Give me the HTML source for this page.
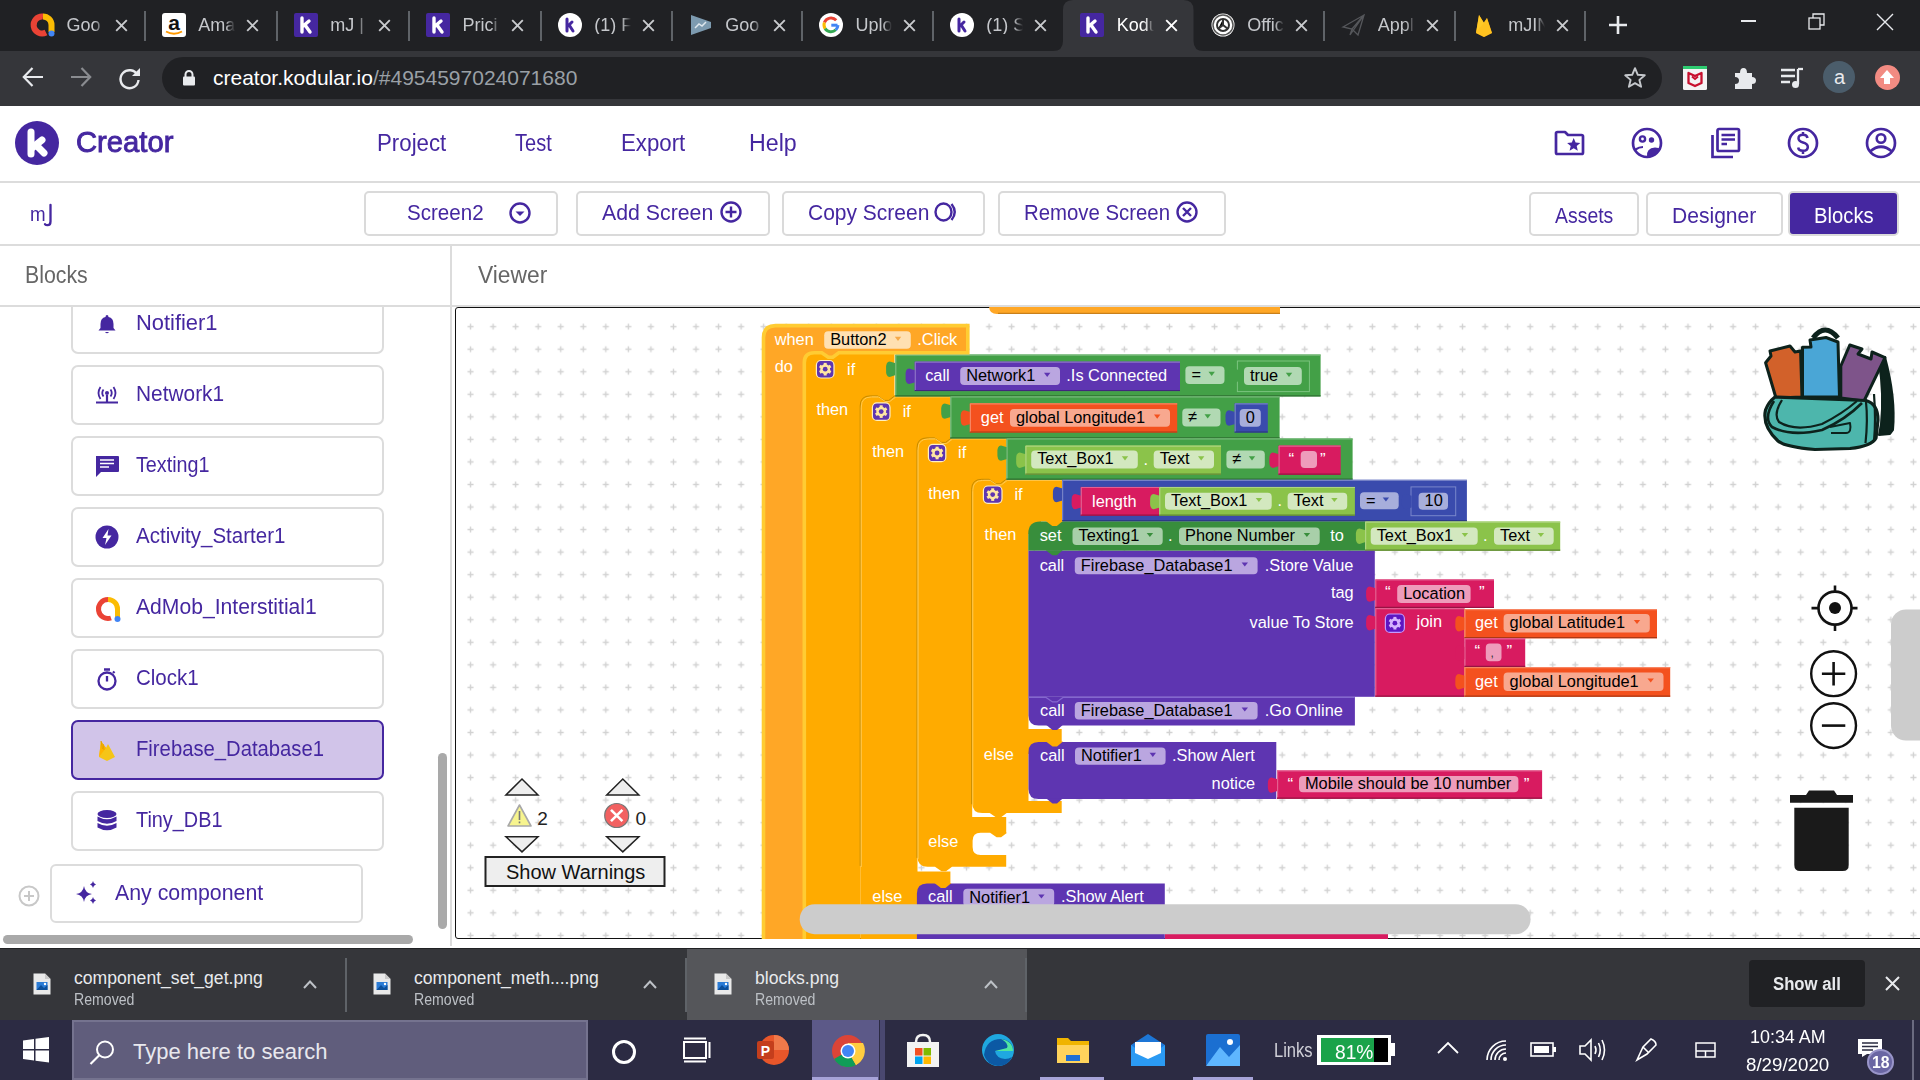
<!DOCTYPE html><html><head><meta charset="utf-8"><style>
*{margin:0;padding:0;box-sizing:border-box}
html,body{width:1920px;height:1080px;overflow:hidden;background:#fff;font-family:"Liberation Sans",sans-serif}
.a{position:absolute}
.t{position:absolute;white-space:nowrap;line-height:1}
svg{position:absolute;overflow:visible}
</style></head><body><div class="a" style="left:0px;top:0px;width:1920px;height:51px;background:#202124"></div><div class="a" style="left:0px;top:51px;width:1920px;height:55px;background:#35363a"></div><div class="t" style="left:66.5px;top:16px;width:37px;overflow:hidden;font-size:18px;color:#c5c7cb;-webkit-mask-image:linear-gradient(to right,#000 75%,transparent)">Goo</div><svg style="left:114.5px;top:18.5px" width="13" height="13" viewBox="0 0 13 13"><path d="M1.2 1.2L11.8 11.8M11.8 1.2L1.2 11.8" stroke="#c9cbce" stroke-width="1.9"/></svg><div class="a" style="left:144px;top:11px;width:2px;height:30px;background:#5f6368"></div><div class="t" style="left:198.3px;top:16px;width:37px;overflow:hidden;font-size:18px;color:#c5c7cb;-webkit-mask-image:linear-gradient(to right,#000 75%,transparent)">Ama</div><svg style="left:246.3px;top:18.5px" width="13" height="13" viewBox="0 0 13 13"><path d="M1.2 1.2L11.8 11.8M11.8 1.2L1.2 11.8" stroke="#c9cbce" stroke-width="1.9"/></svg><div class="a" style="left:276px;top:11px;width:2px;height:30px;background:#5f6368"></div><div class="t" style="left:330.3px;top:16px;width:37px;overflow:hidden;font-size:18px;color:#c5c7cb;-webkit-mask-image:linear-gradient(to right,#000 75%,transparent)">mJ |</div><svg style="left:378.3px;top:18.5px" width="13" height="13" viewBox="0 0 13 13"><path d="M1.2 1.2L11.8 11.8M11.8 1.2L1.2 11.8" stroke="#c9cbce" stroke-width="1.9"/></svg><div class="a" style="left:408px;top:11px;width:2px;height:30px;background:#5f6368"></div><div class="t" style="left:462.5px;top:16px;width:37px;overflow:hidden;font-size:18px;color:#c5c7cb;-webkit-mask-image:linear-gradient(to right,#000 75%,transparent)">Prici</div><svg style="left:510.5px;top:18.5px" width="13" height="13" viewBox="0 0 13 13"><path d="M1.2 1.2L11.8 11.8M11.8 1.2L1.2 11.8" stroke="#c9cbce" stroke-width="1.9"/></svg><div class="a" style="left:540px;top:11px;width:2px;height:30px;background:#5f6368"></div><div class="t" style="left:594.3px;top:16px;width:37px;overflow:hidden;font-size:18px;color:#c5c7cb;-webkit-mask-image:linear-gradient(to right,#000 75%,transparent)">(1) F</div><svg style="left:642.3px;top:18.5px" width="13" height="13" viewBox="0 0 13 13"><path d="M1.2 1.2L11.8 11.8M11.8 1.2L1.2 11.8" stroke="#c9cbce" stroke-width="1.9"/></svg><div class="a" style="left:671px;top:11px;width:2px;height:30px;background:#5f6368"></div><div class="t" style="left:725.2px;top:16px;width:37px;overflow:hidden;font-size:18px;color:#c5c7cb;-webkit-mask-image:linear-gradient(to right,#000 75%,transparent)">Goo</div><svg style="left:773.2px;top:18.5px" width="13" height="13" viewBox="0 0 13 13"><path d="M1.2 1.2L11.8 11.8M11.8 1.2L1.2 11.8" stroke="#c9cbce" stroke-width="1.9"/></svg><div class="a" style="left:801px;top:11px;width:2px;height:30px;background:#5f6368"></div><div class="t" style="left:855.4px;top:16px;width:37px;overflow:hidden;font-size:18px;color:#c5c7cb;-webkit-mask-image:linear-gradient(to right,#000 75%,transparent)">Uplo</div><svg style="left:903.4px;top:18.5px" width="13" height="13" viewBox="0 0 13 13"><path d="M1.2 1.2L11.8 11.8M11.8 1.2L1.2 11.8" stroke="#c9cbce" stroke-width="1.9"/></svg><div class="a" style="left:932px;top:11px;width:2px;height:30px;background:#5f6368"></div><div class="t" style="left:986.2px;top:16px;width:37px;overflow:hidden;font-size:18px;color:#c5c7cb;-webkit-mask-image:linear-gradient(to right,#000 75%,transparent)">(1) S</div><svg style="left:1034.2px;top:18.5px" width="13" height="13" viewBox="0 0 13 13"><path d="M1.2 1.2L11.8 11.8M11.8 1.2L1.2 11.8" stroke="#c9cbce" stroke-width="1.9"/></svg><svg style="left:1053.2px;top:0px" width="150.5" height="51" viewBox="0 0 150.5 51"><path d="M0 51 Q10 51 10 41 L10 10 Q10 0 20 0 L130.5 0 Q140.5 0 140.5 10 L140.5 41 Q140.5 51 150.5 51 Z" fill="#35363a"/></svg><div class="t" style="left:1116.7px;top:16px;width:37px;overflow:hidden;font-size:18px;color:#ffffff;-webkit-mask-image:linear-gradient(to right,#000 75%,transparent)">Kodu</div><svg style="left:1164.7px;top:18.5px" width="13" height="13" viewBox="0 0 13 13"><path d="M1.2 1.2L11.8 11.8M11.8 1.2L1.2 11.8" stroke="#ffffff" stroke-width="1.9"/></svg><div class="t" style="left:1247.2px;top:16px;width:37px;overflow:hidden;font-size:18px;color:#c5c7cb;-webkit-mask-image:linear-gradient(to right,#000 75%,transparent)">Offic</div><svg style="left:1295.2px;top:18.5px" width="13" height="13" viewBox="0 0 13 13"><path d="M1.2 1.2L11.8 11.8M11.8 1.2L1.2 11.8" stroke="#c9cbce" stroke-width="1.9"/></svg><div class="a" style="left:1323px;top:11px;width:2px;height:30px;background:#5f6368"></div><div class="t" style="left:1377.7px;top:16px;width:37px;overflow:hidden;font-size:18px;color:#c5c7cb;-webkit-mask-image:linear-gradient(to right,#000 75%,transparent)">Appl</div><svg style="left:1425.7px;top:18.5px" width="13" height="13" viewBox="0 0 13 13"><path d="M1.2 1.2L11.8 11.8M11.8 1.2L1.2 11.8" stroke="#c9cbce" stroke-width="1.9"/></svg><div class="a" style="left:1454px;top:11px;width:2px;height:30px;background:#5f6368"></div><div class="t" style="left:1508.2px;top:16px;width:37px;overflow:hidden;font-size:18px;color:#c5c7cb;-webkit-mask-image:linear-gradient(to right,#000 75%,transparent)">mJIN</div><svg style="left:1556.2px;top:18.5px" width="13" height="13" viewBox="0 0 13 13"><path d="M1.2 1.2L11.8 11.8M11.8 1.2L1.2 11.8" stroke="#c9cbce" stroke-width="1.9"/></svg><div class="a" style="left:1584px;top:11px;width:2px;height:30px;background:#5f6368"></div><svg style="left:31px;top:13px;" width="24" height="24" viewBox="0 0 24 24"><path d="M12 3.5 A8.5 8.5 0 1 0 15 19.5" fill="none" stroke="#ea4335" stroke-width="6"/><path d="M12 3.5 A8.5 8.5 0 0 1 20.5 12 L20.5 19" fill="none" stroke="#fbbc04" stroke-width="6"/><circle cx="20.5" cy="20.5" r="3" fill="#4285f4"/></svg><svg style="left:161.8px;top:13px;" width="24" height="24" viewBox="0 0 24 24"><rect x="0" y="0" width="24" height="24" rx="3" fill="#fff"/><text x="12" y="16.5" font-family="Liberation Sans" font-size="21" font-weight="bold" text-anchor="middle" fill="#111">a</text><path d="M4 18.5 Q12 23 20 18.5" stroke="#f90" stroke-width="2" fill="none"/></svg><svg style="left:293.8px;top:13px;" width="24" height="24" viewBox="0 0 24 24"><rect x="0" y="0" width="24" height="24" rx="2" fill="#4527a0"/><path d="M8 5 L8 19 M8 14 L15 8 M11 12 L16 19" stroke="#fff" stroke-width="3.4" stroke-linecap="round" fill="none"/></svg><svg style="left:426px;top:13px;" width="24" height="24" viewBox="0 0 24 24"><rect x="0" y="0" width="24" height="24" rx="2" fill="#4527a0"/><path d="M8 5 L8 19 M8 14 L15 8 M11 12 L16 19" stroke="#fff" stroke-width="3.4" stroke-linecap="round" fill="none"/></svg><svg style="left:1080.2px;top:13px;" width="24" height="24" viewBox="0 0 24 24"><rect x="0" y="0" width="24" height="24" rx="2" fill="#4527a0"/><path d="M8 5 L8 19 M8 14 L15 8 M11 12 L16 19" stroke="#fff" stroke-width="3.4" stroke-linecap="round" fill="none"/></svg><svg style="left:557.8px;top:13px;" width="24" height="24" viewBox="0 0 24 24"><circle cx="12" cy="12" r="12" fill="#fff"/><path d="M9 6 L9 18 M9 14 L14 9 M11.5 12.5 L15 18" stroke="#4527a0" stroke-width="3" stroke-linecap="round" fill="none"/></svg><svg style="left:949.7px;top:13px;" width="24" height="24" viewBox="0 0 24 24"><circle cx="12" cy="12" r="12" fill="#fff"/><path d="M9 6 L9 18 M9 14 L14 9 M11.5 12.5 L15 18" stroke="#4527a0" stroke-width="3" stroke-linecap="round" fill="none"/></svg><svg style="left:688.7px;top:13px;" width="24" height="24" viewBox="0 0 24 24"><path d="M2 2 L22 9 L22 15 L2 22 Z" fill="#7d9bb0"/><path d="M6 15 L10 11 L13 13 L17 9" stroke="#dfe8ee" stroke-width="1.5" fill="none"/></svg><svg style="left:818.9px;top:13px;" width="24" height="24" viewBox="0 0 24 24"><circle cx="12" cy="12" r="12" fill="#fff"/><path d="M18.5 12.2 L12.3 12.2" stroke="#4285f4" stroke-width="3"/><path d="M17.2 7.3 A7 7 0 0 0 5.4 9.6" stroke="#ea4335" stroke-width="3" fill="none"/><path d="M5.4 9.6 A7 7 0 0 0 6.1 15.7" stroke="#fbbc04" stroke-width="3" fill="none"/><path d="M6.1 15.7 A7 7 0 0 0 16.8 16.8" stroke="#34a853" stroke-width="3" fill="none"/><path d="M16.8 16.8 A7 7 0 0 0 19 12.2" stroke="#4285f4" stroke-width="3" fill="none"/></svg><svg style="left:1210.7px;top:13px;" width="24" height="24" viewBox="0 0 24 24"><circle cx="12" cy="12" r="11.5" fill="#fff"/><circle cx="12" cy="12" r="10" fill="none" stroke="#555" stroke-width="1.5"/><circle cx="12" cy="12" r="6" fill="none" stroke="#333" stroke-width="2"/><path d="M12 6 L12 12 L7 16 M12 12 L17 16" stroke="#333" stroke-width="2"/></svg><svg style="left:1341.2px;top:13px;" width="24" height="24" viewBox="0 0 24 24"><path d="M2 14 L23 2 L17 22 L11 16 Z M11 16 L23 2 L9 22 Z" fill="none" stroke="#55575b" stroke-width="1.3"/></svg><svg style="left:1473.7px;top:13px;" width="20" height="24" viewBox="0 0 20 24"><path d="M2 20 L5 2 L10 10 L13 5 L18 20 L10 24 Z" fill="#ffa000"/><path d="M2 20 L5 2 L10 10 Z" fill="#ffca28"/><path d="M2 20 L13 5 L18 20 L10 24 Z" fill="#ffca28" opacity="0.8"/></svg><svg style="left:1608px;top:15px;" width="20" height="20" viewBox="0 0 20 20"><path d="M10 1 L10 19 M1 10 L19 10" stroke="#e8eaed" stroke-width="2.6"/></svg><div class="a" style="left:1741px;top:20px;width:15px;height:1.5px;background:#e8eaed"></div><svg style="left:1808px;top:13px;" width="18" height="18" viewBox="0 0 18 18"><rect x="1" y="5" width="11" height="11" fill="none" stroke="#e8eaed" stroke-width="1.3"/><path d="M5 5 L5 1 L16 1 L16 12 L12 12" fill="none" stroke="#e8eaed" stroke-width="1.3"/></svg><svg style="left:1876px;top:13px;" width="18" height="18" viewBox="0 0 18 18"><path d="M1 1 L17 17 M17 1 L1 17" stroke="#e8eaed" stroke-width="1.4"/></svg><svg style="left:22px;top:66px;" width="22" height="22" viewBox="0 0 22 22"><path d="M1.5 11 L21 11 M10.5 2 L1.8 11 L10.5 20" fill="none" stroke="#e8eaed" stroke-width="2.2"/></svg><svg style="left:70px;top:66px;" width="22" height="22" viewBox="0 0 22 22"><path d="M20.5 11 L1 11 M11.5 2 L20.2 11 L11.5 20" fill="none" stroke="#8a8c90" stroke-width="2.2"/></svg><svg style="left:118px;top:66px;" width="24" height="24" viewBox="0 0 24 24"><path d="M19.5 9 A9 9 0 1 0 20.5 14" fill="none" stroke="#e8eaed" stroke-width="2.4"/><path d="M22 2 L22 10 L14 10 Z" fill="#e8eaed"/></svg><div class="a" style="left:162px;top:57px;width:1500px;height:42px;background:#202124;border-radius:21px"></div><svg style="left:182px;top:70px;" width="14" height="16" viewBox="0 0 14 16"><rect x="1" y="6.5" width="12" height="9" rx="1" fill="#e8eaed"/><path d="M3.5 7 L3.5 4.5 A3.5 3.5 0 0 1 10.5 4.5 L10.5 7" fill="none" stroke="#e8eaed" stroke-width="2"/></svg><div class="t" style="left:213px;top:67.2px;font-size:21px;color:#fff;"><span style="color:#ffffff">creator.kodular.io</span><span style="color:#9aa0a6">/#4954597024071680</span></div><svg style="left:1623px;top:66px;" width="24" height="24" viewBox="0 0 24 24"><path d="M12 2.2 L14.8 8.8 L21.8 9.3 L16.4 13.9 L18.1 20.8 L12 17.1 L5.9 20.8 L7.6 13.9 L2.2 9.3 L9.2 8.8 Z" fill="none" stroke="#c4c7cb" stroke-width="1.9" stroke-linejoin="round"/></svg><svg style="left:1683px;top:66px;" width="24" height="24" viewBox="0 0 24 24"><rect x="0" y="0" width="24" height="24" rx="1.5" fill="#f4f4f4"/><rect x="0" y="0" width="24" height="3" fill="#2ecc71"/><path d="M5.5 7 L12 10 L18.5 7 L18.5 17 L12 20 L5.5 17 Z" fill="none" stroke="#c8102e" stroke-width="2.3" stroke-linejoin="round"/><path d="M9 10.5 L12 13 L15 10.5" fill="none" stroke="#c8102e" stroke-width="2"/></svg><svg style="left:1731px;top:65px;" width="26" height="26" viewBox="0 0 26 26"><path d="M4 8 L9 8 Q9 3 12.5 3 Q16 3 16 8 L21 8 L21 12 Q25 12 25 15.5 Q25 19 21 19 L21 24 L4 24 L4 19 Q8 19 8 15.5 Q8 12 4 12 Z" fill="#e8eaed"/></svg><svg style="left:1779px;top:65px;" width="26" height="26" viewBox="0 0 26 26"><path d="M2 5 L16 5 M2 11 L16 11 M2 17 L11 17" stroke="#e8eaed" stroke-width="2.3"/><path d="M19 4 L19 19" stroke="#e8eaed" stroke-width="2.3"/><path d="M19 4 L24 4" stroke="#e8eaed" stroke-width="2.3"/><circle cx="16.5" cy="19.5" r="3.5" fill="#e8eaed"/></svg><div class="a" style="left:1823px;top:61px;width:32px;height:32px;background:#4b5d6b;border-radius:50%"></div><div class="t" style="left:1834px;top:67.1px;font-size:20px;color:#e8eaed;">a</div><div class="a" style="left:1874.5px;top:64.5px;width:25px;height:25px;background:#f28b82;border-radius:50%"></div><svg style="left:1877px;top:67px;" width="20" height="20" viewBox="0 0 20 20"><path d="M10 3 L17 11 L13 11 L13 17 L7 17 L7 11 L3 11 Z" fill="#fff"/></svg><div class="a" style="left:0px;top:106px;width:1920px;height:75px;background:#fff"></div><div class="a" style="left:15px;top:121px;width:44px;height:44px;background:#4527a0;border-radius:50%"></div><svg style="left:15px;top:121px;" width="44" height="44" viewBox="0 0 44 44"><path d="M16 11 L16 33" stroke="#fff" stroke-width="7" stroke-linecap="round"/><path d="M17 27 L27 19 M21 24 L29 32" stroke="#fff" stroke-width="7" stroke-linecap="round"/></svg><div class="t" style="left:75.8px;top:127.0px;font-size:30px;color:#4527a0;transform:scaleX(0.9737);transform-origin:0 0;-webkit-text-stroke:0.9px #4527a0">Creator</div><div class="t" style="left:376.7px;top:132.2px;font-size:23px;color:#4527a0;transform:scaleX(0.9681);transform-origin:0 0;">Project</div><div class="t" style="left:515px;top:132.2px;font-size:23px;color:#4527a0;transform:scaleX(0.8701);transform-origin:0 0;">Test</div><div class="t" style="left:620.7px;top:132.2px;font-size:23px;color:#4527a0;transform:scaleX(0.9674);transform-origin:0 0;">Export</div><div class="t" style="left:749px;top:132.2px;font-size:23px;color:#4527a0;transform:scaleX(1.0084);transform-origin:0 0;">Help</div><svg style="left:1554px;top:130px;" width="32" height="26" viewBox="0 0 32 26"><path d="M2 3.5 Q2 2 3.5 2 L11 2 L14 5 L27.5 5 Q29 5 29 6.5 L29 22.5 Q29 24 27.5 24 L3.5 24 Q2 24 2 22.5 Z" fill="none" stroke="#4527a0" stroke-width="2.7" stroke-linejoin="round"/><path d="M19.7 8 L21.6 12.6 L26.3 12.9 L22.7 16 L23.8 20.8 L19.7 18.3 L15.6 20.8 L16.7 16 L13.1 12.9 L17.8 12.6Z" fill="#4527a0"/></svg><svg style="left:1631px;top:127px;" width="32" height="32" viewBox="0 0 32 32"><circle cx="16" cy="16" r="14" fill="none" stroke="#4527a0" stroke-width="2.7"/><circle cx="11.5" cy="12" r="2.6" fill="none" stroke="#4527a0" stroke-width="2.4"/><circle cx="20.5" cy="13" r="2.7" fill="#4527a0"/><path d="M16 30 Q15 21 24 20.5 Q28 20.5 29.5 22 Q26 29 16 30Z" fill="#4527a0"/><path d="M4.5 22.5 Q8 20 12 20" fill="none" stroke="#4527a0" stroke-width="2.2"/></svg><svg style="left:1709px;top:127px;" width="34" height="34" viewBox="0 0 34 34"><rect x="8.5" y="2" width="21.5" height="22" rx="1.5" fill="none" stroke="#4527a0" stroke-width="2.7"/><path d="M3.5 8 L3.5 30 L24 30" fill="none" stroke="#4527a0" stroke-width="2.7"/><path d="M12.5 8 L26 8 M12.5 12.5 L26 12.5 M12.5 17 L18 17" stroke="#4527a0" stroke-width="2.6"/></svg><svg style="left:1787px;top:127px;" width="32" height="32" viewBox="0 0 32 32"><circle cx="16" cy="16" r="14" fill="none" stroke="#4527a0" stroke-width="2.7"/><path d="M20.5 11 Q20 7.8 16 7.8 Q11.5 7.8 11.5 11.3 Q11.5 14.2 16 15.5 Q20.8 16.8 20.8 20 Q20.8 23.8 16 23.8 Q11.6 23.8 11.2 20.5 M16 5 L16 8 M16 23.8 L16 27" fill="none" stroke="#4527a0" stroke-width="2.5"/></svg><svg style="left:1865px;top:127px;" width="32" height="32" viewBox="0 0 32 32"><circle cx="16" cy="16" r="14" fill="none" stroke="#4527a0" stroke-width="2.7"/><circle cx="16" cy="11.5" r="4.3" fill="none" stroke="#4527a0" stroke-width="2.6"/><path d="M5 24.5 Q16 15 27 24.5" fill="none" stroke="#4527a0" stroke-width="2.7"/></svg><div class="a" style="left:0px;top:181px;width:1920px;height:2px;background:#dcdcdc"></div><div class="a" style="left:0px;top:244px;width:1920px;height:2px;background:#dcdcdc"></div><div class="a" style="left:0px;top:305px;width:1920px;height:2px;background:#dcdcdc"></div><div class="t" style="left:30px;top:204.2px;font-size:20.5px;color:#4527a0;transform:scaleX(0.9136);transform-origin:0 0;">m</div><svg style="left:44px;top:202px;" width="12" height="26" viewBox="0 0 12 26"><path d="M6.5 2.8 L6.5 19.5 Q6.5 23.2 3.5 23.2 Q1.8 23.2 1 22.2" fill="none" stroke="#4527a0" stroke-width="2.3" stroke-linecap="round"/></svg><div class="a" style="left:364px;top:191px;width:194px;height:45px;border:2px solid #dadada;border-radius:5px;background:#fff;"></div><div class="t" style="left:407.4px;top:201.7px;font-size:22px;color:#4527a0;transform:scaleX(0.9349);transform-origin:0 0;">Screen2</div><svg style="left:509px;top:202px;" width="22" height="22" viewBox="0 0 22 22"><circle cx="11" cy="11" r="9.5" fill="none" stroke="#4527a0" stroke-width="2.4"/><path d="M6.5 9.5 L15.5 9.5 L11 14 Z" fill="#4527a0"/></svg><div class="a" style="left:576px;top:191px;width:194px;height:45px;border:2px solid #dadada;border-radius:5px;background:#fff;"></div><div class="t" style="left:602px;top:201.7px;font-size:22px;color:#4527a0;transform:scaleX(0.9682);transform-origin:0 0;">Add Screen</div><svg style="left:720px;top:201px;" width="22" height="22" viewBox="0 0 22 22"><circle cx="11" cy="11" r="9.5" fill="none" stroke="#4527a0" stroke-width="2.4"/><path d="M11 5.5 L11 16.5 M5.5 11 L16.5 11" stroke="#4527a0" stroke-width="2.4"/></svg><div class="a" style="left:782px;top:191px;width:203px;height:45px;border:2px solid #dadada;border-radius:5px;background:#fff;"></div><div class="t" style="left:807.7px;top:201.7px;font-size:22px;color:#4527a0;transform:scaleX(0.9538);transform-origin:0 0;">Copy Screen</div><svg style="left:934px;top:201px;" width="26" height="22" viewBox="0 0 26 22"><ellipse cx="9.5" cy="11" rx="8" ry="8.5" fill="none" stroke="#4527a0" stroke-width="2.4"/><path d="M17.5 3 Q24 11 17.5 19" fill="none" stroke="#4527a0" stroke-width="2.4"/></svg><div class="a" style="left:998px;top:191px;width:228px;height:45px;border:2px solid #dadada;border-radius:5px;background:#fff;"></div><div class="t" style="left:1024px;top:201.7px;font-size:22px;color:#4527a0;transform:scaleX(0.9256);transform-origin:0 0;">Remove Screen</div><svg style="left:1176px;top:201px;" width="22" height="22" viewBox="0 0 22 22"><circle cx="11" cy="11" r="9.5" fill="none" stroke="#4527a0" stroke-width="2.4"/><path d="M7 7 L15 15 M15 7 L7 15" stroke="#4527a0" stroke-width="2.4"/></svg><div class="a" style="left:1529px;top:192px;width:110px;height:44px;border:2px solid #dadada;border-radius:5px;background:#fff;"></div><div class="t" style="left:1555px;top:204.7px;font-size:22px;color:#4527a0;transform:scaleX(0.8831);transform-origin:0 0;">Assets</div><div class="a" style="left:1645.5px;top:192px;width:137px;height:44px;border:2px solid #dadada;border-radius:5px;background:#fff;"></div><div class="t" style="left:1671.7px;top:204.7px;font-size:22px;color:#4527a0;transform:scaleX(0.9575);transform-origin:0 0;">Designer</div><div class="a" style="left:1788px;top:191px;width:111px;height:45px;background:#4527a0;border-radius:5px;border:2px solid #dadada"></div><div class="t" style="left:1814.3px;top:204.7px;font-size:22px;color:#fff;transform:scaleX(0.9213);transform-origin:0 0;">Blocks</div><div class="t" style="left:24.9px;top:264.3px;font-size:23px;color:#666666;transform:scaleX(0.9256);transform-origin:0 0;">Blocks</div><div class="t" style="left:478.3px;top:264.3px;font-size:23px;color:#666666;transform:scaleX(0.9916);transform-origin:0 0;">Viewer</div><div class="a" style="left:450px;top:246px;width:2px;height:700px;background:#dcdcdc"></div><div class="a" style="left:0;top:307px;width:450px;height:641px;overflow:hidden"><div class="a" style="left:71px;top:-13.0px;width:313px;height:59.5px;border-radius:7px;border:2px solid #dcdcdc;background:#fff"></div><svg style="left:95px;top:5px" width="24" height="24" viewBox="0 0 24 24"><path d="M12 3 Q13.5 3 13.5 5 Q18.5 6 18.5 12 L18.5 16 L20.5 18.5 L3.5 18.5 L5.5 16 L5.5 12 Q5.5 6 10.5 5 Q10.5 3 12 3Z" fill="#4527a0"/><path d="M10 20 Q12 22.5 14 20Z" fill="#4527a0"/></svg><div class="t" style="left:136.3px;top:4.9px;font-size:22px;color:#4527a0;transform:scaleX(0.9949);transform-origin:0 0">Notifier1</div><div class="a" style="left:71px;top:58.0px;width:313px;height:59.5px;border-radius:7px;border:2px solid #dcdcdc;background:#fff"></div><svg style="left:95px;top:76px" width="24" height="24" viewBox="0 0 24 24"><circle cx="12" cy="10" r="2" fill="#4527a0"/><path d="M8.5 6.5 Q6 10 8.5 13.5 M15.5 6.5 Q18 10 15.5 13.5 M5.5 4 Q1.5 10 5.5 16 M18.5 4 Q22.5 10 18.5 16" fill="none" stroke="#4527a0" stroke-width="1.8"/><path d="M12 12 L12 19 M1 19.5 L23 19.5" stroke="#4527a0" stroke-width="2.2"/></svg><div class="t" style="left:136.3px;top:75.9px;font-size:22px;color:#4527a0;transform:scaleX(0.9482);transform-origin:0 0">Network1</div><div class="a" style="left:71px;top:129.0px;width:313px;height:59.5px;border-radius:7px;border:2px solid #dcdcdc;background:#fff"></div><svg style="left:95px;top:147px" width="24" height="24" viewBox="0 0 24 24"><path d="M1 2 L23 2 Q24 2 24 3 L24 17 Q24 18 23 18 L6 18 L1 23 Z" fill="#4527a0"/><path d="M5 6 L19 6 M5 9.5 L19 9.5 M5 13 L14 13" stroke="#fff" stroke-width="1.7"/></svg><div class="t" style="left:136.3px;top:146.9px;font-size:22px;color:#4527a0;transform:scaleX(0.8970);transform-origin:0 0">Texting1</div><div class="a" style="left:71px;top:200.0px;width:313px;height:59.5px;border-radius:7px;border:2px solid #dcdcdc;background:#fff"></div><svg style="left:95px;top:218px" width="24" height="24" viewBox="0 0 24 24"><circle cx="12" cy="12" r="11.5" fill="#4527a0"/><path d="M13.5 4 L7.5 13 L11.5 13 L10 20 L16.5 10.5 L12.5 10.5 Z" fill="#fff"/></svg><div class="t" style="left:136.3px;top:217.9px;font-size:22px;color:#4527a0;transform:scaleX(0.9328);transform-origin:0 0">Activity_Starter1</div><div class="a" style="left:71px;top:271.0px;width:313px;height:59.5px;border-radius:7px;border:2px solid #dcdcdc;background:#fff"></div><svg style="left:94px;top:289px" width="28" height="26" viewBox="0 0 28 26"><path d="M14 3.5 A9.5 9.5 0 1 0 17 22" fill="none" stroke="#ea4335" stroke-width="5"/><path d="M14 3.5 A9.5 9.5 0 0 1 23.5 13 L23.5 21" fill="none" stroke="#fbbc04" stroke-width="5"/><circle cx="23.5" cy="23" r="3" fill="#4285f4"/></svg><div class="t" style="left:136.3px;top:288.9px;font-size:22px;color:#4527a0;transform:scaleX(0.9601);transform-origin:0 0">AdMob_Interstitial1</div><div class="a" style="left:71px;top:342.0px;width:313px;height:59.5px;border-radius:7px;border:2px solid #dcdcdc;background:#fff"></div><svg style="left:95px;top:360px" width="24" height="24" viewBox="0 0 24 24"><circle cx="12" cy="14" r="8.5" fill="none" stroke="#4527a0" stroke-width="2.3"/><path d="M9 2.5 L15 2.5 M12 9 L12 14.5 M18 6 L19.5 4.5" stroke="#4527a0" stroke-width="2.3"/></svg><div class="t" style="left:136.3px;top:359.9px;font-size:22px;color:#4527a0;transform:scaleX(0.9324);transform-origin:0 0">Clock1</div><div class="a" style="left:71px;top:413.0px;width:313px;height:59.5px;border-radius:7px;border:2px solid #4527a0;background:#d1c4e9"></div><svg style="left:95px;top:431px" width="24" height="24" viewBox="0 0 24 24"><path d="M4 19 L6 3 L11 10 L13 6 L20 19 L12 23 Z" fill="#f5c518"/><path d="M4 19 L6 3 L11 10 Z" fill="#ffb300"/><path d="M6 3 L7.5 11 M8 6 L9 12" stroke="#e2a400" stroke-width="1"/></svg><div class="t" style="left:136.3px;top:430.9px;font-size:22px;color:#4527a0;transform:scaleX(0.9206);transform-origin:0 0">Firebase_Database1</div><div class="a" style="left:71px;top:484.0px;width:313px;height:59.5px;border-radius:7px;border:2px solid #dcdcdc;background:#fff"></div><svg style="left:95px;top:502px" width="24" height="24" viewBox="0 0 24 24"><ellipse cx="12" cy="5" rx="9.5" ry="4" fill="#4527a0"/><path d="M2.5 7.5 Q12 13 21.5 7.5 L21.5 12 Q12 17.5 2.5 12 Z M2.5 14 Q12 19.5 21.5 14 L21.5 18.5 Q12 24 2.5 18.5 Z" fill="#4527a0"/></svg><div class="t" style="left:136.3px;top:501.9px;font-size:22px;color:#4527a0;transform:scaleX(0.9032);transform-origin:0 0">Tiny_DB1</div><div class="a" style="left:50.4px;top:557.4px;width:312.5px;height:58.5px;border-radius:6px;border:2px solid #dcdcdc;background:#fff"></div><svg style="left:18px;top:578px" width="22" height="22" viewBox="0 0 22 22"><circle cx="11" cy="11" r="9.5" fill="none" stroke="#c8c8c8" stroke-width="2"/><path d="M11 6 L11 16 M6 11 L16 11" stroke="#c8c8c8" stroke-width="2"/></svg><svg style="left:74px;top:573px" width="26" height="26" viewBox="0 0 26 26"><path d="M10 6 Q11 13 18 14 Q11 15 10 22 Q9 15 2 14 Q9 13 10 6Z" fill="#4527a0"/><path d="M19 1 Q19.5 4 22 4.5 Q19.5 5 19 8 Q18.5 5 16 4.5 Q18.5 4 19 1Z M19 17 Q19.5 20 22 20.5 Q19.5 21 19 24 Q18.5 21 16 20.5 Q18.5 20 19 17Z" fill="#4527a0"/></svg><div class="t" style="left:115.2px;top:574.7px;font-size:22px;color:#4527a0;transform:scaleX(0.9695);transform-origin:0 0">Any component</div><div class="a" style="left:438px;top:446px;width:9px;height:176px;border-radius:5px;background:#a9a9a9"></div><div class="a" style="left:3px;top:628px;width:410px;height:9px;border-radius:5px;background:#a9a9a9"></div></div><div class="a" style="left:455px;top:307px;width:1470px;height:632px;border:1px solid #111;border-radius:3px;overflow:hidden;background:#fff"></div><div class="a" style="left:456px;top:307px;width:1464px;height:632px;overflow:hidden"><svg style="left:-456px;top:-307px" width="1920" height="1080" viewBox="0 0 1920 1080" font-family="Liberation Sans, sans-serif"><defs><pattern id="g" x="459.3" y="315.4" width="22.545" height="22.545" patternUnits="userSpaceOnUse"><path d="M8.27 11.27 L14.27 11.27 M11.27 8.27 L11.27 14.27" stroke="#d2d2d2" stroke-width="1.4"/></pattern></defs><rect x="456.0" y="308.0" width="1464.0" height="630.0" rx="0" fill="url(#g)" /><path d="M989 300 L1280 300 L1280 314 L997 314 Q989 314 989 306Z" fill="#ffa726" /><path d="M998 313.4 L1280 313.4" stroke="#c9801a" stroke-width="1.2"/><path d="M763.5 337.6 Q763.5 325.6 775.5 325.6 L967.8 325.6 L967.8 352.7 L838.8 352.7 L832.8 357.2 L828.3 357.2 L821.8 352.7 L814.3 352.7 Q804.3 352.7 804.3 362.7 L804.3 960 L763.5 960Z" fill="#ffa726" /><rect x="803.3" y="351.7" width="12.7" height="12.3" rx="0" fill="#ffa726" /><path d="M820.8 351.7 L839.8 351.7 L833.1 357.7 L828.0 357.7Z" fill="#ffa726"/><text x="774.7" y="345.0" font-size="16.35" fill="#fff" text-anchor="start">when</text><rect x="824.2" y="331.2" width="86.6" height="17.6" rx="4" fill="#ffe0b2" /><text x="830.2" y="344.9" font-size="16.35" fill="#000" text-anchor="start">Button2</text><path d="M894.8 336.7 L901.2 336.7 L898.0 340.9Z" fill="#f5a94a"/><text x="917.3" y="345.0" font-size="16.35" fill="#fff" text-anchor="start">.Click</text><text x="774.7" y="372.3" font-size="16.35" fill="#fff" text-anchor="start">do</text><path d="M804.3 362.7 Q804.3 352.7 814.3 352.7 L821.8 352.7 L828.3 357.2 L832.8 357.2 L838.8 352.7 L894.5 352.7 L894.5 396.4 L860.7 396.4 L860.7 960 L804.3 960Z" fill="#ffab00" /><rect x="859.7" y="395.4" width="12.3" height="12.6" rx="0" fill="#ffab00" /><path d="M877.2 395.4 L896.2 395.4 L889.5 401.4 L884.4 401.4Z" fill="#ffab00"/><path d="M860.7 406.4 Q860.7 396.4 870.7 396.4 L878.2 396.4 L884.7 400.9 L889.2 400.9 L895.2 396.4 L950.3 396.4 L950.3 438.4 L917.5 438.4 L917.5 871.4 L950.4 871.4 L950.4 884.3 L951.5 884.3 L945.5 888.8 L941.0 888.8 L934.5 884.3 L917 884.3 L917 960 L860.7 960Z" fill="#ffab00" /><rect x="916.5" y="437.4" width="12.5" height="12.6" rx="0" fill="#ffab00" /><rect x="916.0" y="883.0" width="13.0" height="13.0" rx="0" fill="#ffab00" /><path d="M934.0 437.4 L953.0 437.4 L946.3 443.4 L941.2 443.4Z" fill="#ffab00"/><path d="M917.5 448.4 Q917.5 438.4 927.5 438.4 L935.0 438.4 L941.5 442.9 L946.0 442.9 L952.0 438.4 L1006.5 438.4 L1006.5 479.8 L972.2 479.8 L972.2 817 L1006.2 817 L1006.2 832.7 L1007.1 832.7 L1001.1 837.2 L996.6 837.2 L990.1 832.7 L980.6 832.7 Q972.6 832.7 972.6 840.7 L972.6 847 Q972.6 855 980.6 855 L1006.2 855 L1006.2 866.7 L952.0 866.7 L946.0 871.2 L941.5 871.2 L935.0 866.7 L927.5 866.7 Q917.5 866.7 917.5 856.7Z" fill="#ffab00" /><rect x="971.2" y="478.8" width="12.8" height="13.2" rx="0" fill="#ffab00" /><path d="M988.7 478.8 L1007.7 478.8 L1001.0 484.8 L995.9 484.8Z" fill="#ffab00"/><path d="M972.2 489.8 Q972.2 479.8 982.2 479.8 L989.7 479.8 L996.2 484.3 L1000.7 484.3 L1006.7 479.8 L1062 479.8 L1062 521.5 L1028.5 521.5 L1028.5 729 L1061.7 729 L1061.7 742 L1063.0 742.0 L1057.0 746.5 L1052.5 746.5 L1046.0 742.0 L1028.5 742 L1028.5 801 L1061.7 801 L1061.7 813.1 L1006.7 813.1 L1000.7 817.6 L996.2 817.6 L989.7 813.1 L982.2 813.1 Q972.2 813.1 972.2 803.1Z" fill="#ffab00" /><rect x="1027.3" y="520.5" width="13.7" height="13.5" rx="0" fill="#ffab00" /><rect x="1027.5" y="741.0" width="12.5" height="13.0" rx="0" fill="#ffab00" /><path d="M860.7 866.4 L860.7 406.4 Q860.7 396.4 870.7 396.4 L878.2 396.4 L884.7 400.9 L889.2 400.9 L895.2 396.4 L949.7 396.4" fill="none" stroke="#c48a00" stroke-width="1" transform="translate(-0.5 -0.5)"/><path d="M860.7 866.4 L860.7 406.4 Q860.7 396.4 870.7 396.4 L878.2 396.4 L884.7 400.9 L889.2 400.9 L895.2 396.4 L949.7 396.4" fill="none" stroke="#ffc94f" stroke-width="1" transform="translate(0.6 0.6)"/><path d="M917.5 858.4 L917.5 448.4 Q917.5 438.4 927.5 438.4 L935.0 438.4 L941.5 442.9 L946.0 442.9 L952.0 438.4 L1005.5 438.4" fill="none" stroke="#c48a00" stroke-width="1" transform="translate(-0.5 -0.5)"/><path d="M917.5 858.4 L917.5 448.4 Q917.5 438.4 927.5 438.4 L935.0 438.4 L941.5 442.9 L946.0 442.9 L952.0 438.4 L1005.5 438.4" fill="none" stroke="#ffc94f" stroke-width="1" transform="translate(0.6 0.6)"/><path d="M972.2 804.8 L972.2 489.8 Q972.2 479.8 982.2 479.8 L989.7 479.8 L996.2 484.3 L1000.7 484.3 L1006.7 479.8 L1061.2 479.8" fill="none" stroke="#c48a00" stroke-width="1" transform="translate(-0.5 -0.5)"/><path d="M972.2 804.8 L972.2 489.8 Q972.2 479.8 982.2 479.8 L989.7 479.8 L996.2 484.3 L1000.7 484.3 L1006.7 479.8 L1061.2 479.8" fill="none" stroke="#ffc94f" stroke-width="1" transform="translate(0.6 0.6)"/><rect x="816.4" y="360.5" width="17.6" height="17.5" rx="4.5" fill="#5e35b1" stroke="#fff0c0" stroke-width="1.2"/><rect x="823.7" y="362.9" width="3" height="12.6" fill="#ffe7a3" transform="rotate(0 825.2 369.2)"/><rect x="823.7" y="362.9" width="3" height="12.6" fill="#ffe7a3" transform="rotate(60 825.2 369.2)"/><rect x="823.7" y="362.9" width="3" height="12.6" fill="#ffe7a3" transform="rotate(120 825.2 369.2)"/><circle cx="825.2" cy="369.2" r="4.9" fill="#ffe7a3"/><circle cx="825.2" cy="369.2" r="2.4" fill="#5e35b1"/><text x="847.0" y="375.3" font-size="16.35" fill="#fff" text-anchor="start">if</text><text x="816.4" y="415.3" font-size="16.35" fill="#fff" text-anchor="start">then</text><rect x="872.4" y="402.9" width="17.6" height="17.5" rx="4.5" fill="#5e35b1" stroke="#fff0c0" stroke-width="1.2"/><rect x="879.7" y="405.3" width="3" height="12.6" fill="#ffe7a3" transform="rotate(0 881.2 411.6)"/><rect x="879.7" y="405.3" width="3" height="12.6" fill="#ffe7a3" transform="rotate(60 881.2 411.6)"/><rect x="879.7" y="405.3" width="3" height="12.6" fill="#ffe7a3" transform="rotate(120 881.2 411.6)"/><circle cx="881.2" cy="411.6" r="4.9" fill="#ffe7a3"/><circle cx="881.2" cy="411.6" r="2.4" fill="#5e35b1"/><text x="902.7" y="416.5" font-size="16.35" fill="#fff" text-anchor="start">if</text><text x="872.3" y="457.0" font-size="16.35" fill="#fff" text-anchor="start">then</text><rect x="928.4" y="444.3" width="17.4" height="17.4" rx="4.5" fill="#5e35b1" stroke="#fff0c0" stroke-width="1.2"/><rect x="935.6" y="446.7" width="3" height="12.6" fill="#ffe7a3" transform="rotate(0 937.1 453.0)"/><rect x="935.6" y="446.7" width="3" height="12.6" fill="#ffe7a3" transform="rotate(60 937.1 453.0)"/><rect x="935.6" y="446.7" width="3" height="12.6" fill="#ffe7a3" transform="rotate(120 937.1 453.0)"/><circle cx="937.1" cy="453.0" r="4.9" fill="#ffe7a3"/><circle cx="937.1" cy="453.0" r="2.4" fill="#5e35b1"/><text x="958.0" y="458.0" font-size="16.35" fill="#fff" text-anchor="start">if</text><text x="928.3" y="498.5" font-size="16.35" fill="#fff" text-anchor="start">then</text><rect x="983.4" y="486.0" width="18.6" height="17.3" rx="4.5" fill="#5e35b1" stroke="#fff0c0" stroke-width="1.2"/><rect x="991.2" y="488.3" width="3" height="12.6" fill="#ffe7a3" transform="rotate(0 992.7 494.6)"/><rect x="991.2" y="488.3" width="3" height="12.6" fill="#ffe7a3" transform="rotate(60 992.7 494.6)"/><rect x="991.2" y="488.3" width="3" height="12.6" fill="#ffe7a3" transform="rotate(120 992.7 494.6)"/><circle cx="992.7" cy="494.6" r="4.9" fill="#ffe7a3"/><circle cx="992.7" cy="494.6" r="2.4" fill="#5e35b1"/><text x="1014.4" y="500.0" font-size="16.35" fill="#fff" text-anchor="start">if</text><text x="984.6" y="539.8" font-size="16.35" fill="#fff" text-anchor="start">then</text><text x="983.8" y="759.7" font-size="16.35" fill="#fff" text-anchor="start">else</text><text x="928.3" y="847.3" font-size="16.35" fill="#fff" text-anchor="start">else</text><text x="872.3" y="901.9" font-size="16.35" fill="#fff" text-anchor="start">else</text><path d="M895.8 363.3 L889.7 361.5 Q885.6 361.7 886.1 369.2 Q885.6 376.7 889.7 376.9 L895.8 375.1Z" fill="#43a047"/><rect x="895.2" y="354.5" width="425.4" height="41.9" rx="0" fill="#43a047" /><path d="M895.7 355.1 L1320.6 355.1" stroke="#7bbc7e" stroke-width="1.2"/><path d="M895.8 355.0 L895.8 395.9" stroke="#7bbc7e" stroke-width="1.2"/><path d="M895.2 395.8 L1320.6 395.8" stroke="#2f7032" stroke-width="1.2"/><path d="M915.3 370.4 L909.2 368.6 Q905.1 368.8 905.6 376.3 Q905.1 383.8 909.2 384.0 L915.3 382.2Z" fill="#5e35b1"/><rect x="914.7" y="361.6" width="265.3" height="29.5" rx="0" fill="#5e35b1" /><path d="M915.2 362.2 L1180.0 362.2" stroke="#8e72c8" stroke-width="1.2"/><path d="M915.3 362.1 L915.3 390.6" stroke="#8e72c8" stroke-width="1.2"/><path d="M914.7 390.5 L1180.0 390.5" stroke="#42257c" stroke-width="1.2"/><text x="925.2" y="381.0" font-size="16.35" fill="#fff" text-anchor="start">call</text><rect x="960.2" y="367.0" width="99.8" height="18.0" rx="4" fill="#baa6e0" /><text x="966.2" y="380.9" font-size="16.35" fill="#000" text-anchor="start">Network1</text><path d="M1044.0 372.7 L1050.4 372.7 L1047.2 376.9Z" fill="#5e35b1"/><text x="1066.3" y="381.0" font-size="16.35" fill="#fff" text-anchor="start">.Is Connected</text><rect x="1185.4" y="366.2" width="39.1" height="17.8" rx="4" fill="#b1d9b3" /><text x="1191.4" y="380.0" font-size="16.35" fill="#000" text-anchor="start">=</text><path d="M1208.5 371.8 L1214.9 371.8 L1211.7 376.0Z" fill="#43a047"/><rect x="1237.4" y="361.0" width="72.0" height="30.6" rx="0" fill="#43a047" stroke="#7cc47f" stroke-width="1"/><path d="M1238.0 369.8 L1231.9 368.0 Q1227.8 368.2 1228.3 375.7 Q1227.8 383.2 1231.9 383.4 L1238.0 381.6Z" fill="#43a047"/><rect x="1244.0" y="367.0" width="57.8" height="18.0" rx="4" fill="#b1d9b3" /><text x="1250.0" y="380.9" font-size="16.35" fill="#000" text-anchor="start">true</text><path d="M1285.8 372.7 L1292.2 372.7 L1289.0 376.9Z" fill="#43a047"/><path d="M950.9 405.2 L944.8 403.4 Q940.7 403.6 941.2 411.1 Q940.7 418.6 944.8 418.8 L950.9 417.0Z" fill="#43a047"/><rect x="950.3" y="396.4" width="329.3" height="42.0" rx="0" fill="#43a047" /><path d="M950.8 397.0 L1279.6 397.0" stroke="#7bbc7e" stroke-width="1.2"/><path d="M950.9 396.9 L950.9 437.9" stroke="#7bbc7e" stroke-width="1.2"/><path d="M950.3 437.8 L1279.6 437.8" stroke="#2f7032" stroke-width="1.2"/><path d="M970.4 412.1 L964.3 410.3 Q960.2 410.5 960.7 418.0 Q960.2 425.5 964.3 425.7 L970.4 423.9Z" fill="#f4511e"/><rect x="969.8" y="403.3" width="207.4" height="29.3" rx="0" fill="#f4511e" /><path d="M970.3 403.9 L1177.2 403.9" stroke="#f78562" stroke-width="1.2"/><path d="M970.4 403.8 L970.4 432.1" stroke="#f78562" stroke-width="1.2"/><path d="M969.8 432.0 L1177.2 432.0" stroke="#ab3915" stroke-width="1.2"/><text x="980.8" y="423.0" font-size="16.35" fill="#fff" text-anchor="start">get</text><rect x="1010.0" y="409.0" width="160.0" height="17.7" rx="4" fill="#f8a88f" /><text x="1016.0" y="422.8" font-size="16.35" fill="#000" text-anchor="start">global Longitude1</text><path d="M1154.0 414.6 L1160.4 414.6 L1157.2 418.8Z" fill="#f4511e"/><rect x="1182.3" y="408.5" width="38.2" height="18.0" rx="4" fill="#b1d9b3" /><text x="1188.3" y="422.4" font-size="16.35" fill="#000" text-anchor="start">≠</text><path d="M1204.5 414.2 L1210.9 414.2 L1207.7 418.4Z" fill="#43a047"/><path d="M1235.2 412.1 L1229.1 410.3 Q1225.0 410.5 1225.5 418.0 Q1225.0 425.5 1229.1 425.7 L1235.2 423.9Z" fill="#3a4bad"/><rect x="1234.6" y="403.3" width="33.2" height="29.3" rx="0" fill="#3a4bad" /><path d="M1235.1 403.9 L1267.8 403.9" stroke="#7581c6" stroke-width="1.2"/><path d="M1235.2 403.8 L1235.2 432.1" stroke="#7581c6" stroke-width="1.2"/><path d="M1234.6 432.0 L1267.8 432.0" stroke="#293479" stroke-width="1.2"/><rect x="1239.7" y="409.0" width="21.1" height="17.7" rx="4" fill="#a7aedb" /><text x="1245.7" y="422.8" font-size="16.35" fill="#000" text-anchor="start">0</text><path d="M1007.1 447.2 L1001.0 445.4 Q996.9 445.6 997.4 453.1 Q996.9 460.6 1001.0 460.8 L1007.1 459.0Z" fill="#43a047"/><rect x="1006.5" y="438.4" width="346.1" height="41.4" rx="0" fill="#43a047" /><path d="M1007.0 439.0 L1352.6 439.0" stroke="#7bbc7e" stroke-width="1.2"/><path d="M1007.1 438.9 L1007.1 479.3" stroke="#7bbc7e" stroke-width="1.2"/><path d="M1006.5 479.2 L1352.6 479.2" stroke="#2f7032" stroke-width="1.2"/><path d="M1025.9 454.3 L1019.8 452.5 Q1015.7 452.7 1016.2 460.2 Q1015.7 467.7 1019.8 467.9 L1025.9 466.1Z" fill="#8bc34a"/><rect x="1025.3" y="445.5" width="195.7" height="29.3" rx="0" fill="#8bc34a" /><path d="M1025.8 446.1 L1221.0 446.1" stroke="#aed580" stroke-width="1.2"/><path d="M1025.9 446.0 L1025.9 474.3" stroke="#aed580" stroke-width="1.2"/><path d="M1025.3 474.2 L1221.0 474.2" stroke="#618834" stroke-width="1.2"/><rect x="1031.2" y="450.6" width="106.6" height="17.8" rx="4" fill="#d3e8bf" /><text x="1037.2" y="464.4" font-size="16.35" fill="#000" text-anchor="start">Text_Box1</text><path d="M1121.8 456.2 L1128.2 456.2 L1125.0 460.4Z" fill="#8bc34a"/><text x="1143.5" y="465.0" font-size="16.35" fill="#fff" text-anchor="start">.</text><rect x="1153.7" y="450.6" width="60.3" height="17.8" rx="4" fill="#d3e8bf" /><text x="1159.7" y="464.4" font-size="16.35" fill="#000" text-anchor="start">Text</text><path d="M1198.0 456.2 L1204.4 456.2 L1201.2 460.4Z" fill="#8bc34a"/><rect x="1226.4" y="450.6" width="38.4" height="17.8" rx="4" fill="#b1d9b3" /><text x="1232.4" y="464.4" font-size="16.35" fill="#000" text-anchor="start">≠</text><path d="M1248.8 456.2 L1255.2 456.2 L1252.0 460.4Z" fill="#43a047"/><path d="M1279.1 454.3 L1273.0 452.5 Q1268.9 452.7 1269.4 460.2 Q1268.9 467.7 1273.0 467.9 L1279.1 466.1Z" fill="#d81b60"/><rect x="1278.5" y="445.5" width="62.2" height="29.3" rx="0" fill="#d81b60" /><path d="M1279.0 446.1 L1340.7 446.1" stroke="#e45f90" stroke-width="1.2"/><path d="M1279.1 446.0 L1279.1 474.3" stroke="#e45f90" stroke-width="1.2"/><path d="M1278.5 474.2 L1340.7 474.2" stroke="#971343" stroke-width="1.2"/><text x="1288.5" y="465.0" font-size="17" fill="#fff" text-anchor="start">“</text><text x="1320.0" y="465.0" font-size="17" fill="#fff" text-anchor="start">”</text><rect x="1300.7" y="451.0" width="16.3" height="17.0" rx="4" fill="#ee9cbb" /><path d="M1062.6 488.6 L1056.5 486.8 Q1052.4 487.0 1052.9 494.5 Q1052.4 502.0 1056.5 502.2 L1062.6 500.4Z" fill="#3a4bad"/><rect x="1062.0" y="479.8" width="404.9" height="41.7" rx="0" fill="#3a4bad" /><path d="M1062.5 480.4 L1466.9 480.4" stroke="#7581c6" stroke-width="1.2"/><path d="M1062.6 480.3 L1062.6 521.0" stroke="#7581c6" stroke-width="1.2"/><path d="M1062.0 520.9 L1466.9 520.9" stroke="#293479" stroke-width="1.2"/><path d="M1081.3 495.7 L1075.2 493.9 Q1071.1 494.1 1071.6 501.6 Q1071.1 509.1 1075.2 509.3 L1081.3 507.5Z" fill="#d81b60"/><rect x="1080.7" y="486.9" width="78.5" height="28.8" rx="0" fill="#d81b60" /><path d="M1081.2 487.5 L1159.2 487.5" stroke="#e45f90" stroke-width="1.2"/><path d="M1081.3 487.4 L1081.3 515.2" stroke="#e45f90" stroke-width="1.2"/><path d="M1080.7 515.1 L1159.2 515.1" stroke="#971343" stroke-width="1.2"/><text x="1092.0" y="507.0" font-size="16.35" fill="#fff" text-anchor="start">length</text><path d="M1159.8 495.7 L1153.7 493.9 Q1149.6 494.1 1150.1 501.6 Q1149.6 509.1 1153.7 509.3 L1159.8 507.5Z" fill="#8bc34a"/><rect x="1159.2" y="486.9" width="195.7" height="28.8" rx="0" fill="#8bc34a" /><path d="M1159.7 487.5 L1354.9 487.5" stroke="#aed580" stroke-width="1.2"/><path d="M1159.8 487.4 L1159.8 515.2" stroke="#aed580" stroke-width="1.2"/><path d="M1159.2 515.1 L1354.9 515.1" stroke="#618834" stroke-width="1.2"/><rect x="1165.0" y="492.7" width="106.7" height="17.1" rx="4" fill="#d3e8bf" /><text x="1171.0" y="506.1" font-size="16.35" fill="#000" text-anchor="start">Text_Box1</text><path d="M1255.7 497.9 L1262.1 497.9 L1258.9 502.1Z" fill="#8bc34a"/><text x="1277.5" y="506.0" font-size="16.35" fill="#fff" text-anchor="start">.</text><rect x="1287.6" y="492.7" width="59.6" height="17.1" rx="4" fill="#d3e8bf" /><text x="1293.6" y="506.1" font-size="16.35" fill="#000" text-anchor="start">Text</text><path d="M1331.2 497.9 L1337.6 497.9 L1334.4 502.1Z" fill="#8bc34a"/><rect x="1360.0" y="492.2" width="38.7" height="17.1" rx="4" fill="#a7aedb" /><text x="1366.0" y="505.6" font-size="16.35" fill="#000" text-anchor="start">=</text><path d="M1382.7 497.4 L1389.1 497.4 L1385.9 501.6Z" fill="#3a4bad"/><rect x="1411.0" y="486.9" width="44.7" height="28.8" rx="0" fill="#3a4bad" stroke="#7986cb" stroke-width="1"/><path d="M1411.6 495.7 L1405.5 493.9 Q1401.4 494.1 1401.9 501.6 Q1401.4 509.1 1405.5 509.3 L1411.6 507.5Z" fill="#3a4bad"/><rect x="1418.6" y="492.7" width="29.4" height="17.1" rx="4" fill="#a7aedb" /><text x="1424.6" y="506.1" font-size="16.35" fill="#000" text-anchor="start">10</text><path d="M1028.3 533.5 Q1028.3 521.5 1040.3 521.5 L1365 521.5 L1365 550.8 L1028.3 550.8Z" fill="#388e3c" /><path d="M1045.8 520.9 L1052.3 526.0 L1056.8 526.0 L1062.8 520.9Z" fill="#ffab00"/><text x="1039.7" y="540.5" font-size="16.35" fill="#fff" text-anchor="start">set</text><rect x="1072.5" y="527.4" width="90.2" height="17.6" rx="4" fill="#a8cfa9" /><text x="1078.5" y="541.1" font-size="16.35" fill="#000" text-anchor="start">Texting1</text><path d="M1146.7 532.9 L1153.1 532.9 L1149.9 537.1Z" fill="#388e3c"/><text x="1168.0" y="541.0" font-size="16.35" fill="#fff" text-anchor="start">.</text><rect x="1179.0" y="527.4" width="140.7" height="17.6" rx="4" fill="#a8cfa9" /><text x="1185.0" y="541.1" font-size="16.35" fill="#000" text-anchor="start">Phone Number</text><path d="M1303.7 532.9 L1310.1 532.9 L1306.9 537.1Z" fill="#388e3c"/><text x="1330.3" y="541.0" font-size="16.35" fill="#fff" text-anchor="start">to</text><path d="M1365.6 530.3 L1359.5 528.5 Q1355.4 528.7 1355.9 536.2 Q1355.4 543.7 1359.5 543.9 L1365.6 542.1Z" fill="#8bc34a"/><rect x="1365.0" y="521.5" width="195.2" height="29.3" rx="0" fill="#8bc34a" /><path d="M1365.5 522.1 L1560.2 522.1" stroke="#aed580" stroke-width="1.2"/><path d="M1365.6 522.0 L1365.6 550.3" stroke="#aed580" stroke-width="1.2"/><path d="M1365.0 550.2 L1560.2 550.2" stroke="#618834" stroke-width="1.2"/><rect x="1370.7" y="527.5" width="107.0" height="17.3" rx="4" fill="#d3e8bf" /><text x="1376.7" y="541.0" font-size="16.35" fill="#000" text-anchor="start">Text_Box1</text><path d="M1461.7 532.9 L1468.1 532.9 L1464.9 537.0Z" fill="#8bc34a"/><text x="1483.0" y="541.0" font-size="16.35" fill="#fff" text-anchor="start">.</text><rect x="1494.0" y="527.5" width="59.7" height="17.3" rx="4" fill="#d3e8bf" /><text x="1500.0" y="541.0" font-size="16.35" fill="#000" text-anchor="start">Text</text><path d="M1537.7 532.9 L1544.1 532.9 L1540.9 537.0Z" fill="#8bc34a"/><rect x="1028.4" y="550.8" width="346.4" height="146.0" rx="0" fill="#5e35b1" /><path d="M1045.8 550.2 L1052.3 555.3 L1056.8 555.3 L1062.8 550.2Z" fill="#388e3c"/><text x="1039.7" y="570.8" font-size="16.35" fill="#fff" text-anchor="start">call</text><rect x="1074.8" y="557.2" width="182.8" height="17.1" rx="4" fill="#baa6e0" /><text x="1080.8" y="570.6" font-size="16.35" fill="#000" text-anchor="start">Firebase_Database1</text><path d="M1241.6 562.5 L1248.0 562.5 L1244.8 566.6Z" fill="#5e35b1"/><text x="1264.7" y="570.8" font-size="16.35" fill="#fff" text-anchor="start">.Store Value</text><text x="1353.7" y="598.4" font-size="16.35" fill="#fff" text-anchor="end">tag</text><text x="1353.7" y="627.5" font-size="16.35" fill="#fff" text-anchor="end">value To Store</text><path d="M1375.8 588.2 L1369.7 586.4 Q1365.6 586.6 1366.1 594.1 Q1365.6 601.6 1369.7 601.8 L1375.8 600.0Z" fill="#d81b60"/><rect x="1375.2" y="579.4" width="118.8" height="28.6" rx="0" fill="#d81b60" /><path d="M1375.7 580.0 L1494.0 580.0" stroke="#e45f90" stroke-width="1.2"/><path d="M1375.8 579.9 L1375.8 607.5" stroke="#e45f90" stroke-width="1.2"/><path d="M1375.2 607.4 L1494.0 607.4" stroke="#971343" stroke-width="1.2"/><text x="1385.0" y="598.4" font-size="17" fill="#fff" text-anchor="start">“</text><text x="1479.0" y="598.4" font-size="17" fill="#fff" text-anchor="start">”</text><rect x="1397.2" y="585.0" width="73.4" height="17.9" rx="4" fill="#ee9cbb" /><text x="1403.2" y="598.9" font-size="16.35" fill="#000" text-anchor="start">Location</text><path d="M1375.8 616.8 L1369.7 615.0 Q1365.6 615.2 1366.1 622.7 Q1365.6 630.2 1369.7 630.4 L1375.8 628.6Z" fill="#d81b60"/><rect x="1375.2" y="608.0" width="89.2" height="88.8" rx="0" fill="#d81b60" /><path d="M1375.7 608.6 L1464.4 608.6" stroke="#e45f90" stroke-width="1.2"/><path d="M1375.8 608.5 L1375.8 696.3" stroke="#e45f90" stroke-width="1.2"/><path d="M1375.2 696.2 L1464.4 696.2" stroke="#971343" stroke-width="1.2"/><rect x="1385.4" y="614.0" width="19.0" height="18.4" rx="4.5" fill="#5e16c2" stroke="#c49cff" stroke-width="1.2"/><rect x="1393.4" y="616.9" width="3" height="12.6" fill="#d6b3ff" transform="rotate(0 1394.9 623.2)"/><rect x="1393.4" y="616.9" width="3" height="12.6" fill="#d6b3ff" transform="rotate(60 1394.9 623.2)"/><rect x="1393.4" y="616.9" width="3" height="12.6" fill="#d6b3ff" transform="rotate(120 1394.9 623.2)"/><circle cx="1394.9" cy="623.2" r="4.9" fill="#d6b3ff"/><circle cx="1394.9" cy="623.2" r="2.4" fill="#5e16c2"/><text x="1416.6" y="627.3" font-size="16.35" fill="#fff" text-anchor="start">join</text><path d="M1465.0 617.8 L1458.9 616.0 Q1454.8 616.2 1455.3 623.7 Q1454.8 631.2 1458.9 631.4 L1465.0 629.6Z" fill="#f4511e"/><rect x="1464.4" y="609.0" width="192.6" height="29.3" rx="0" fill="#f4511e" /><path d="M1464.9 609.6 L1657.0 609.6" stroke="#f78562" stroke-width="1.2"/><path d="M1465.0 609.5 L1465.0 637.8" stroke="#f78562" stroke-width="1.2"/><path d="M1464.4 637.7 L1657.0 637.7" stroke="#ab3915" stroke-width="1.2"/><text x="1475.0" y="628.0" font-size="16.35" fill="#fff" text-anchor="start">get</text><rect x="1503.6" y="614.0" width="146.2" height="18.4" rx="4" fill="#f8a88f" /><text x="1509.6" y="628.1" font-size="16.35" fill="#000" text-anchor="start">global Latitude1</text><path d="M1633.8 619.9 L1640.2 619.9 L1637.0 624.1Z" fill="#f4511e"/><path d="M1465.0 647.1 L1458.9 645.3 Q1454.8 645.5 1455.3 653.0 Q1454.8 660.5 1458.9 660.7 L1465.0 658.9Z" fill="#d81b60"/><rect x="1464.4" y="638.3" width="60.8" height="28.7" rx="0" fill="#d81b60" /><path d="M1464.9 638.9 L1525.2 638.9" stroke="#e45f90" stroke-width="1.2"/><path d="M1465.0 638.8 L1465.0 666.5" stroke="#e45f90" stroke-width="1.2"/><path d="M1464.4 666.4 L1525.2 666.4" stroke="#971343" stroke-width="1.2"/><text x="1474.5" y="657.4" font-size="17" fill="#fff" text-anchor="start">“</text><text x="1506.5" y="657.4" font-size="17" fill="#fff" text-anchor="start">”</text><rect x="1485.8" y="643.6" width="15.7" height="17.7" rx="4" fill="#ee9cbb" /><text x="1490.5" y="657.0" font-size="12" fill="#333" text-anchor="start">,</text><path d="M1465.0 675.8 L1458.9 674.0 Q1454.8 674.2 1455.3 681.7 Q1454.8 689.2 1458.9 689.4 L1465.0 687.6Z" fill="#f4511e"/><rect x="1464.4" y="667.0" width="205.8" height="29.8" rx="0" fill="#f4511e" /><path d="M1464.9 667.6 L1670.2 667.6" stroke="#f78562" stroke-width="1.2"/><path d="M1465.0 667.5 L1465.0 696.3" stroke="#f78562" stroke-width="1.2"/><path d="M1464.4 696.2 L1670.2 696.2" stroke="#ab3915" stroke-width="1.2"/><text x="1475.0" y="687.0" font-size="16.35" fill="#fff" text-anchor="start">get</text><rect x="1503.6" y="672.5" width="159.9" height="18.5" rx="4" fill="#f8a88f" /><text x="1509.6" y="686.6" font-size="16.35" fill="#000" text-anchor="start">global Longitude1</text><path d="M1647.5 678.5 L1653.9 678.5 L1650.7 682.6Z" fill="#f4511e"/><path d="M1028.5 696.8 L1354.9 696.8 L1354.9 725.4 L1038.5 725.4 Q1028.5 725.4 1028.5 715.4Z" fill="#5e35b1" /><path d="M1028.5 697.4 L1046 697.4 L1052.5 701.9 L1057 701.9 L1063 697.4 L1354.9 697.4" fill="none" stroke="#8467cf" stroke-width="1.2"/><path d="M1046.0 724.8 L1052.5 729.9 L1057.0 729.9 L1063.0 724.8Z" fill="#5e35b1"/><text x="1040.0" y="716.0" font-size="16.35" fill="#fff" text-anchor="start">call</text><rect x="1074.8" y="702.0" width="182.8" height="17.5" rx="4" fill="#baa6e0" /><text x="1080.8" y="715.6" font-size="16.35" fill="#000" text-anchor="start">Firebase_Database1</text><path d="M1241.6 707.5 L1248.0 707.5 L1244.8 711.6Z" fill="#5e35b1"/><text x="1264.7" y="716.0" font-size="16.35" fill="#fff" text-anchor="start">.Go Online</text><path d="M1028.5 752 Q1028.5 742 1038.5 742 L1276.3 742 L1276.3 798.9 L1038.5 798.9 Q1028.5 798.9 1028.5 788.9Z" fill="#5e35b1" /><path d="M1046.0 741.4 L1052.5 746.5 L1057.0 746.5 L1063.0 741.4Z" fill="#ffab00"/><path d="M1046.0 798.3 L1052.5 803.4 L1057.0 803.4 L1063.0 798.3Z" fill="#5e35b1"/><text x="1040.0" y="761.0" font-size="16.35" fill="#fff" text-anchor="start">call</text><rect x="1075.0" y="747.4" width="90.6" height="17.4" rx="4" fill="#baa6e0" /><text x="1081.0" y="761.0" font-size="16.35" fill="#000" text-anchor="start">Notifier1</text><path d="M1149.6 752.8 L1156.0 752.8 L1152.8 757.0Z" fill="#5e35b1"/><text x="1172.0" y="761.0" font-size="16.35" fill="#fff" text-anchor="start">.Show Alert</text><text x="1255.2" y="789.4" font-size="16.35" fill="#fff" text-anchor="end">notice</text><path d="M1277.6 779.2 L1271.5 777.4 Q1267.4 777.6 1267.9 785.1 Q1267.4 792.6 1271.5 792.8 L1277.6 791.0Z" fill="#d81b60"/><rect x="1277.0" y="770.4" width="265.1" height="28.4" rx="0" fill="#d81b60" /><path d="M1277.5 771.0 L1542.1 771.0" stroke="#e45f90" stroke-width="1.2"/><path d="M1277.6 770.9 L1277.6 798.3" stroke="#e45f90" stroke-width="1.2"/><path d="M1277.0 798.2 L1542.1 798.2" stroke="#971343" stroke-width="1.2"/><text x="1287.5" y="790.0" font-size="17" fill="#fff" text-anchor="start">“</text><text x="1523.7" y="790.0" font-size="17" fill="#fff" text-anchor="start">”</text><rect x="1299.0" y="776.0" width="219.4" height="16.3" rx="4" fill="#ee9cbb" /><text x="1305.0" y="789.0" font-size="16.35" fill="#000" text-anchor="start">Mobile should be 10 number</text><path d="M916.9 893.6 Q916.9 883.6 926.9 883.6 L1164.8 883.6 L1164.8 960 L916.9 960Z" fill="#5e35b1" /><path d="M934.4 883.0 L940.9 888.1 L945.4 888.1 L951.4 883.0Z" fill="#ffab00"/><text x="928.0" y="902.0" font-size="16.35" fill="#fff" text-anchor="start">call</text><rect x="963.3" y="888.8" width="90.9" height="17.7" rx="4" fill="#baa6e0" /><text x="969.3" y="902.5" font-size="16.35" fill="#000" text-anchor="start">Notifier1</text><path d="M1038.2 894.4 L1044.6 894.4 L1041.4 898.5Z" fill="#5e35b1"/><text x="1061.0" y="902.0" font-size="16.35" fill="#fff" text-anchor="start">.Show Alert</text><rect x="1165.0" y="928.0" width="223.0" height="32.0" rx="0" fill="#d81b60" /><path d="M763.5 337.6 Q763.5 325.6 775.5 325.6 L967.8 325.6 L967.8 352.7 L838.8 352.7 L832.8 357.2 L828.3 357.2 L821.8 352.7 L814.3 352.7 Q804.3 352.7 804.3 362.7 L804.3 960 L763.5 960Z" fill="none" stroke="#ffcc33" stroke-width="3.6"/><path d="M505.9 795 L522 779 L538 795Z" fill="#eee" stroke="#222" stroke-width="1.5"/><path d="M606.7 795 L622.8 779 L638.9 795Z" fill="#eee" stroke="#222" stroke-width="1.5"/><path d="M505.9 836.7 L522 851.9 L538 836.7Z" fill="#eee" stroke="#222" stroke-width="1.5"/><path d="M606.7 836.7 L622.8 851.9 L638.9 836.7Z" fill="#eee" stroke="#222" stroke-width="1.5"/><path d="M508 826 L519.5 805 L531 826Z" fill="#f7f48e" stroke="#a8a8a8" stroke-width="1.6" stroke-linejoin="round"/><path d="M519.5 811 L519.5 820" stroke="#777" stroke-width="1.6"/><rect x="518.7" y="821.5" width="1.6" height="1.8" fill="#777"/><text x="537.3" y="824.8" font-size="19" fill="#222" text-anchor="start">2</text><circle cx="616.7" cy="815.5" r="12" fill="#f26161" stroke="#777" stroke-width="1.2"/><path d="M611 809.8 L622.4 821.2 M622.4 809.8 L611 821.2" stroke="#fff" stroke-width="2.6"/><text x="635.5" y="824.8" font-size="19" fill="#222" text-anchor="start">0</text><rect x="485.5" y="857.0" width="179.0" height="29.0" rx="0" fill="#eeeeee" stroke="#222" stroke-width="2"/><text x="506.0" y="879.0" font-size="20" fill="#111" text-anchor="start">Show Warnings</text><rect x="799.7" y="904.2" width="730.9" height="30.0" rx="15" fill="#cccccc" /><rect x="1891.0" y="609.4" width="44.0" height="131.2" rx="15" fill="#cccccc" /><circle cx="1835" cy="608.1" r="16.5" fill="#fff" stroke="#111" stroke-width="2.6"/><circle cx="1835" cy="608.1" r="6" fill="#111"/><path d="M1835 585.5 L1835 592 M1835 624.5 L1835 631 M1811.5 608.1 L1818.5 608.1 M1851.5 608.1 L1857.5 608.1" stroke="#111" stroke-width="2.6"/><circle cx="1833.6" cy="673.7" r="22.4" fill="#fff" stroke="#111" stroke-width="2.4"/><path d="M1833.6 662 L1833.6 685.4 M1821.9 673.7 L1845.3 673.7" stroke="#111" stroke-width="2.6"/><circle cx="1833.6" cy="725.6" r="22.4" fill="#fff" stroke="#111" stroke-width="2.4"/><path d="M1821.9 725.6 L1845.3 725.6" stroke="#111" stroke-width="2.6"/><path d="M1790 795 L1853 795 L1853 802.7 L1790 802.7Z M1806 795 L1809 790.6 L1834 790.6 L1837 795Z" fill="#1a1a1a"/><path d="M1794.3 807.8 L1848.7 807.8 L1848.7 864.9 Q1848.7 870.9 1842.7 870.9 L1800.3 870.9 Q1794.3 870.9 1794.3 864.9Z" fill="#1a1a1a"/><g stroke-linejoin="round"><path d="M1813 338 Q1825 322 1838 338" fill="none" stroke="#0d221c" stroke-width="5"/><path d="M1879 362 L1885 357 Q1896 398 1893 430 L1890 434 L1879 435 L1881 424 Q1884 394 1879 362Z" fill="#0d221c" stroke="#0d221c" stroke-width="2"/><path d="M1765.6 362.8 L1776 398 L1802 397 L1800.6 351.1 L1795 352 L1790 346 L1770 351 L1771 356Z" fill="#d2612a" stroke="#0d221c" stroke-width="3"/><path d="M1802.5 347.2 L1811 347 L1810 340 L1826 337.5 L1838 342 L1839.5 397 L1802.5 397Z" fill="#4aa6d6" stroke="#0d221c" stroke-width="3"/><path d="M1840.8 366 L1849.8 345 L1862 349 L1858 354 L1871 359 L1872 352 L1885 357.6 L1864 401 L1840.8 398Z" fill="#7e548a" stroke="#0d221c" stroke-width="3"/><path d="M1775 397 L1866 400.5 Q1878 404 1878 420 L1876 438 Q1872 446 1850 448.5 L1815 449.5 Q1785 447 1778 441 Q1762 426 1765.5 410 Q1768.5 402 1775 397Z" fill="#4db6ac" stroke="#0d221c" stroke-width="3.2"/><path d="M1774 401 Q1763 418 1772 427 Q1790 437 1822 430 Q1845 420 1862 403" fill="none" stroke="#0d221c" stroke-width="2.6"/><path d="M1782 400 Q1773 414 1779 422 Q1795 432 1822 424 Q1842 414 1857 401" fill="none" stroke="#0d221c" stroke-width="2.2"/><path d="M1866 402 Q1868 420 1865.5 443 M1874 394 Q1876 420 1874 441" fill="none" stroke="#0d221c" stroke-width="2.2"/><path d="M1830 427 L1850 423 Q1852 433 1846 433 L1831 433" fill="none" stroke="#0d221c" stroke-width="2"/></g></svg></div><div class="a" style="left:0px;top:948px;width:1920px;height:72px;background:#35363a"></div><div class="a" style="left:0px;top:948px;width:1920px;height:1px;background:#202124"></div><div class="a" style="left:687px;top:949px;width:340px;height:71px;background:#55565a"></div><svg style="left:33px;top:973px;" width="18" height="22" viewBox="0 0 18 22"><path d="M0.5 0.5 L12 0.5 L17.5 6 L17.5 21.5 L0.5 21.5 Z" fill="#e9e9e9"/><path d="M12 0.5 L12 6 L17.5 6" fill="#c9c9c9"/><rect x="3.5" y="9" width="11" height="8" fill="#2a7bd5"/><path d="M3.5 17 L8 12 L11 15 L14.5 12 L14.5 17Z" fill="#0c4f9a"/><circle cx="12" cy="11" r="1.2" fill="#fff"/></svg><div class="t" style="left:74px;top:969.6px;font-size:17.6px;color:#e8eaed;">component_set_get.png</div><div class="t" style="left:74px;top:991.5px;font-size:16px;color:#bdc1c6;transform:scaleX(0.8821);transform-origin:0 0;">Removed</div><svg style="left:303px;top:980px;" width="14" height="9" viewBox="0 0 14 9"><path d="M1 8 L7 1.5 L13 8" fill="none" stroke="#bdc1c6" stroke-width="2"/></svg><div class="a" style="left:345px;top:958px;width:1.5px;height:54px;background:#5f6368"></div><svg style="left:373px;top:973px;" width="18" height="22" viewBox="0 0 18 22"><path d="M0.5 0.5 L12 0.5 L17.5 6 L17.5 21.5 L0.5 21.5 Z" fill="#e9e9e9"/><path d="M12 0.5 L12 6 L17.5 6" fill="#c9c9c9"/><rect x="3.5" y="9" width="11" height="8" fill="#2a7bd5"/><path d="M3.5 17 L8 12 L11 15 L14.5 12 L14.5 17Z" fill="#0c4f9a"/><circle cx="12" cy="11" r="1.2" fill="#fff"/></svg><div class="t" style="left:414px;top:969.6px;font-size:17.6px;color:#e8eaed;">component_meth....png</div><div class="t" style="left:414px;top:991.5px;font-size:16px;color:#bdc1c6;transform:scaleX(0.8821);transform-origin:0 0;">Removed</div><svg style="left:643px;top:980px;" width="14" height="9" viewBox="0 0 14 9"><path d="M1 8 L7 1.5 L13 8" fill="none" stroke="#bdc1c6" stroke-width="2"/></svg><div class="a" style="left:685px;top:958px;width:1.5px;height:54px;background:#5f6368"></div><svg style="left:714px;top:973px;" width="18" height="22" viewBox="0 0 18 22"><path d="M0.5 0.5 L12 0.5 L17.5 6 L17.5 21.5 L0.5 21.5 Z" fill="#e9e9e9"/><path d="M12 0.5 L12 6 L17.5 6" fill="#c9c9c9"/><rect x="3.5" y="9" width="11" height="8" fill="#2a7bd5"/><path d="M3.5 17 L8 12 L11 15 L14.5 12 L14.5 17Z" fill="#0c4f9a"/><circle cx="12" cy="11" r="1.2" fill="#fff"/></svg><div class="t" style="left:755px;top:969.6px;font-size:17.6px;color:#e8eaed;">blocks.png</div><div class="t" style="left:755px;top:991.5px;font-size:16px;color:#bdc1c6;transform:scaleX(0.8821);transform-origin:0 0;">Removed</div><svg style="left:984px;top:980px;" width="14" height="9" viewBox="0 0 14 9"><path d="M1 8 L7 1.5 L13 8" fill="none" stroke="#bdc1c6" stroke-width="2"/></svg><div class="a" style="left:1025px;top:958px;width:1.5px;height:54px;background:#5f6368"></div><div class="a" style="left:1749px;top:960px;width:116px;height:47px;background:#202124;border-radius:4px"></div><div class="t" style="left:1773.3px;top:975.2px;font-size:18px;color:#e8eaed;transform:scaleX(0.9287);transform-origin:0 0;font-weight:bold;">Show all</div><svg style="left:1885px;top:976px;" width="15" height="15" viewBox="0 0 15 15"><path d="M1 1 L14 14 M14 1 L1 14" stroke="#e8eaed" stroke-width="2"/></svg><div class="a" style="left:0px;top:1020px;width:1920px;height:60px;background:#2c2b43"></div><svg style="left:23px;top:1037px;" width="26" height="26" viewBox="0 0 26 26"><path d="M0 3.5 L11 2 L11 12 L0 12Z M12.5 1.8 L26 0 L26 12 L12.5 12Z M0 13.5 L11 13.5 L11 23.5 L0 22Z M12.5 13.5 L26 13.5 L26 25.5 L12.5 23.7Z" fill="#fff"/></svg><div class="a" style="left:72px;top:1020px;width:516px;height:60px;background:#605d7c;border:2px solid #75738f"></div><svg style="left:89px;top:1040px;" width="26" height="26" viewBox="0 0 26 26"><circle cx="16" cy="9.5" r="8" fill="none" stroke="#fff" stroke-width="2"/><path d="M10.5 15 L1.5 24" stroke="#fff" stroke-width="2.2"/></svg><div class="t" style="left:133px;top:1040.9px;font-size:22px;color:#e8e8ee;">Type here to search</div><div class="a" style="left:612px;top:1040px;width:24px;height:24px;border:3px solid #fff;border-radius:50%"></div><svg style="left:683px;top:1037px;" width="28" height="26" viewBox="0 0 28 26"><rect x="1" y="5" width="22" height="16" fill="none" stroke="#fff" stroke-width="2"/><path d="M1 1.5 L23 1.5 M1 24.5 L23 24.5 M26.5 5 L26.5 21" stroke="#fff" stroke-width="2"/></svg><svg style="left:755px;top:1033px;" width="34" height="34" viewBox="0 0 34 34"><circle cx="19" cy="17" r="15" fill="#e8562a"/><path d="M19 2 A15 15 0 0 1 34 17 L19 17Z" fill="#f0794a"/><rect x="2" y="8" width="17" height="18" rx="2" fill="#c43e1c"/><text x="10.5" y="22.5" font-family="Liberation Sans" font-size="14" font-weight="bold" text-anchor="middle" fill="#fff">P</text></svg><div class="a" style="left:812px;top:1020px;width:67px;height:60px;background:#5c5988"></div><div class="a" style="left:880px;top:1020px;width:5px;height:60px;background:#4a4870"></div><svg style="left:831px;top:1034px;" width="34" height="34" viewBox="0 0 34 34"><circle cx="17" cy="17" r="16" fill="#db4437"/><path d="M17 17 L3.1 25 A16 16 0 0 0 25 30.9Z" fill="#0f9d58"/><path d="M17 17 L25 30.9 A16 16 0 0 0 33 17 Z" fill="#ffcd40"/><path d="M17 17 L33 17 A16 16 0 0 0 17 1 L3.1 9Z" fill="#db4437" opacity="0"/><path d="M17 9 L32 9 A16 16 0 0 1 25 30.9 L17 17Z" fill="#ffcd40"/><circle cx="17" cy="17" r="7.5" fill="#fff"/><circle cx="17" cy="17" r="6" fill="#4285f4"/></svg><div class="a" style="left:812px;top:1077px;width:66px;height:3px;background:#a7a3d8"></div><svg style="left:905px;top:1033px;" width="36" height="36" viewBox="0 0 36 36"><path d="M2 9 L34 9 L34 34 L2 34Z" fill="#f3f3f3"/><path d="M11 9 Q11 2 18 2 Q25 2 25 9" fill="none" stroke="#f3f3f3" stroke-width="2.5"/><rect x="10" y="15" width="7.5" height="7.5" fill="#f25022"/><rect x="18.5" y="15" width="7.5" height="7.5" fill="#7fba00"/><rect x="10" y="23.5" width="7.5" height="7.5" fill="#00a4ef"/><rect x="18.5" y="23.5" width="7.5" height="7.5" fill="#ffb900"/></svg><svg style="left:981px;top:1033px;" width="34" height="34" viewBox="0 0 34 34"><circle cx="17" cy="17" r="16" fill="#1fa8e0"/><path d="M3 22 Q5 6 20 6 Q32 7 32 18 L14 18 Q15 25 24 26 Q28 26 31 24 Q27 33 17 33 Q6 32 3 22Z" fill="#0c59a4"/><path d="M14 18 L32 18 Q32 8 20 6 Q28 10 26 15Z" fill="#50e6a0"/></svg><svg style="left:1056px;top:1035px;" width="34" height="30" viewBox="0 0 34 30"><path d="M1 3 L12 3 L15 6 L33 6 L33 28 L1 28Z" fill="#f0b400"/><path d="M1 10 L33 10 L33 28 L1 28Z" fill="#ffd35c"/><rect x="10" y="20" width="14" height="6" fill="#1f6fd6"/></svg><div class="a" style="left:1040px;top:1077px;width:64px;height:3px;background:#a7a3d8"></div><svg style="left:1130px;top:1033px;" width="36" height="34" viewBox="0 0 36 34"><path d="M1 12 L18 1 L35 12 L35 33 L1 33Z" fill="#1d76d6"/><path d="M1 12 L18 24 L35 12 L35 33 L1 33Z" fill="#2b9af3"/><path d="M5 9 L31 9 L31 20 L18 26 L5 20Z" fill="#fff"/></svg><svg style="left:1205px;top:1033px;" width="36" height="34" viewBox="0 0 36 34"><rect x="1" y="1" width="34" height="32" rx="2" fill="#1b6fd1"/><path d="M1 33 L15 14 L24 24 L35 12 L35 33Z" fill="#5fb6ff"/><circle cx="25" cy="9" r="3" fill="#fff"/></svg><div class="a" style="left:1193px;top:1077px;width:60px;height:3px;background:#a7a3d8"></div><div class="t" style="left:1273.7px;top:1040.2px;font-size:20px;color:#d0d0d8;transform:scaleX(0.8268);transform-origin:0 0;">Links</div><div class="a" style="left:1316.7px;top:1034.8px;width:74.6px;height:29.9px;background:#fff"></div><div class="a" style="left:1391.3px;top:1043.4px;width:3.5px;height:12.6px;background:#fff"></div><div class="a" style="left:1321.2px;top:1038.2px;width:52.9px;height:23.8px;background:#1aa34a"></div><div class="a" style="left:1374.1px;top:1038.2px;width:13.8px;height:23.8px;background:#000"></div><div class="t" style="left:1335px;top:1041.0px;font-size:21px;color:#fff;transform:scaleX(0.9136);transform-origin:0 0;">81%</div><svg style="left:1437px;top:1041px;" width="22" height="14" viewBox="0 0 22 14"><path d="M1 12 L11 2 L21 12" fill="none" stroke="#fff" stroke-width="1.8"/></svg><svg style="left:1484px;top:1038px;" width="26" height="26" viewBox="0 0 26 26"><path d="M3 22 A19 19 0 0 1 22 3 M7 22 A15 15 0 0 1 22 7 M11 22 A11 11 0 0 1 22 11 M15 22 A7 7 0 0 1 22 15" fill="none" stroke="#fff" stroke-width="1.6"/><circle cx="21" cy="21" r="2" fill="#fff"/></svg><svg style="left:1530px;top:1041px;" width="28" height="18" viewBox="0 0 28 18"><rect x="1" y="2" width="22" height="13" fill="none" stroke="#fff" stroke-width="1.6"/><rect x="4" y="5" width="15" height="7" fill="#fff"/><rect x="23" y="6" width="3" height="5" fill="#fff"/></svg><svg style="left:1578px;top:1037px;" width="28" height="26" viewBox="0 0 28 26"><path d="M2 9 L7 9 L13 3 L13 23 L7 17 L2 17Z" fill="none" stroke="#fff" stroke-width="1.6"/><path d="M17 9 Q19 13 17 17 M20.5 6 Q24 13 20.5 20 M24 3 Q29 13 24 23" fill="none" stroke="#fff" stroke-width="1.6"/></svg><svg style="left:1634px;top:1037px;" width="26" height="26" viewBox="0 0 26 26"><path d="M3 23 L9 10 L17 2 Q22 4 22 8 L13 17 Z M9 10 L14 15" fill="none" stroke="#fff" stroke-width="1.6"/></svg><svg style="left:1695px;top:1042px;" width="21" height="16" viewBox="0 0 21 16"><rect x="1" y="1" width="19" height="14" fill="none" stroke="#fff" stroke-width="1.5"/><path d="M1 9 L20 9 M10.5 9 L10.5 15" stroke="#fff" stroke-width="1.5"/></svg><div class="t" style="left:1749.9px;top:1027.3px;font-size:19px;color:#fff;transform:scaleX(0.9418);transform-origin:0 0;">10:34 AM</div><div class="t" style="left:1746.4px;top:1054.8px;font-size:19px;color:#fff;transform:scaleX(0.9844);transform-origin:0 0;">8/29/2020</div><svg style="left:1858px;top:1038.9px;" width="25" height="18" viewBox="0 0 25 18"><path d="M0 0 L24 0 L24 15 L9 15 L4 18 L4 15 L0 15Z" fill="#fff"/><path d="M4 4 L20 4 M4 7.5 L20 7.5 M4 11 L15 11" stroke="#2a2b40" stroke-width="1.3"/></svg><div class="a" style="left:1866.7px;top:1049.2px;width:27.5px;height:26px;background:#6a66a3;border-radius:50%;border:2px solid #9995c9"></div><div class="t" style="left:1871.5px;top:1055.0px;font-size:16px;color:#fff;transform:scaleX(0.9834);transform-origin:0 0;font-weight:bold">18</div><div class="a" style="left:1912px;top:1020px;width:2px;height:60px;background:#6a6a80"></div></body></html>
